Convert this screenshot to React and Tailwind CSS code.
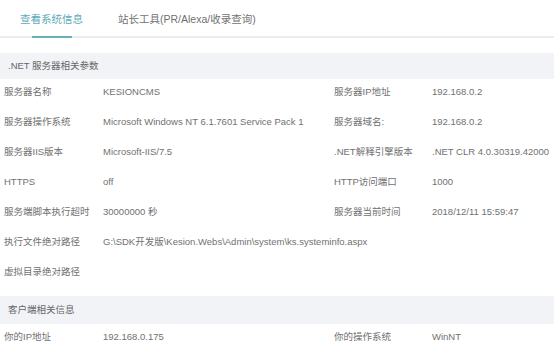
import React from 'react';

const serverRows = [
    ['服务器名称', 'KESIONCMS', '服务器IP地址', '192.168.0.2'],
    ['服务器操作系统', 'Microsoft Windows NT 6.1.7601 Service Pack 1', '服务器域名:', '192.168.0.2'],
    ['服务器IIS版本', 'Microsoft-IIS/7.5', '.NET解释引擎版本', '.NET CLR 4.0.30319.42000'],
    ['HTTPS', 'off', 'HTTP访问端口', '1000'],
    ['服务端脚本执行超时', '30000000 秒', '服务器当前时间', '2018/12/11 15:59:47'],
];

const Row = ({ cells }) => (
    <div className="grid grid-cols-[99px_231px_98px_1fr] h-[30px] pl-[4px] pt-[7px] leading-[12px] text-[#717171]">
        {cells.map((c, i) => (
            <div key={i} className="whitespace-nowrap">{c}</div>
        ))}
    </div>
);

const WideRow = ({ label, value }) => (
    <div className="grid grid-cols-[99px_1fr] h-[30px] pl-[4px] pt-[7px] leading-[12px] text-[#717171]">
        <div className="whitespace-nowrap">{label}</div>
        <div className="whitespace-nowrap">{value}</div>
    </div>
);

const SectionHeader = ({ children, className = '' }) => (
    <div className={`bg-[#f2f3f7] flex items-center pl-[8px] text-[#666] ${className}`}>
        {children}
    </div>
);

export default function App() {
    return (
        <div className="w-[554px] h-[350px] overflow-hidden bg-white text-[9.5px] font-['Liberation_Sans','Noto_Sans_CJK_SC',sans-serif]">
            {/* Tabs */}
            <div className="relative h-[38px] border-b-2 border-[#ececec] flex text-[10.5px]">
                <div className="relative pl-[20px] pt-[12px] text-[#5eacb8]">
                    查看系统信息
                    <div className="absolute left-[32px] w-[40px] top-[36px] h-[2px] bg-[#66b0ba]" />
                </div>
                <div className="pl-[35px] pt-[12px] text-[#717171]">站长工具(PR/Alexa/收录查询)</div>
            </div>

            <SectionHeader className="mt-[15px] h-[26px]">.NET 服务器相关参数</SectionHeader>
            {serverRows.map((r, i) => (
                <Row key={i} cells={r} />
            ))}
            <WideRow label="执行文件绝对路径" value="G:\SDK开发版\Kesion.Webs\Admin\system\ks.systeminfo.aspx" />
            <WideRow label="虚拟目录绝对路径" value="" />

            <SectionHeader className="mt-[7px] h-[28px]">客户端相关信息</SectionHeader>
            <Row cells={['你的IP地址', '192.168.0.175', '你的操作系统', 'WinNT']} />
        </div>
    );
}
